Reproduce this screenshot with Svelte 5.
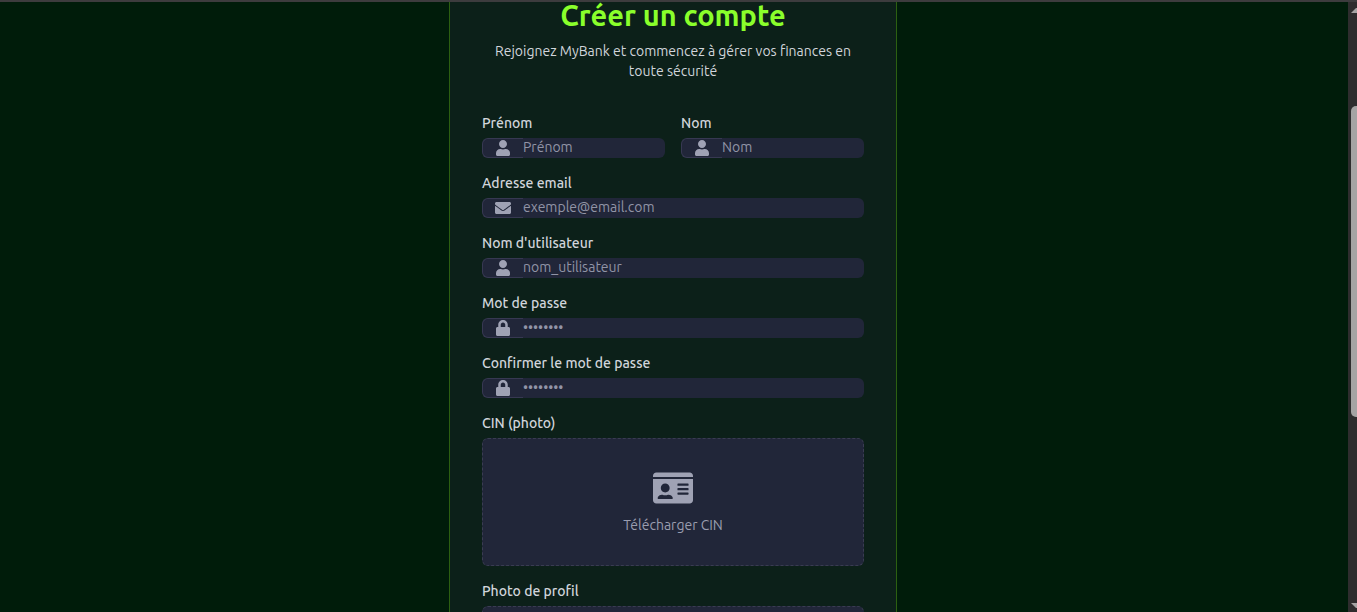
<script>
  const icons = {
    user: {
      box: '0 0 448 512',
      path: 'M224 256c70.7 0 128-57.3 128-128S294.7 0 224 0 96 57.3 96 128s57.3 128 128 128zm89.6 32h-16.7c-22.2 10.2-46.9 16-72.9 16s-50.6-5.8-72.9-16h-16.7C60.2 288 0 348.2 0 422.4V464c0 26.5 21.5 48 48 48h352c26.5 0 48-21.5 48-48v-41.6c0-74.2-60.2-134.4-134.4-134.4z'
    },
    mail: {
      box: '0 0 512 512',
      path: 'M502.3 190.8c3.9-3.1 9.7-.2 9.7 4.7V400c0 26.5-21.5 48-48 48H48c-26.5 0-48-21.5-48-48V195.6c0-5 5.7-7.8 9.7-4.7 22.4 17.4 52.1 39.5 154.1 113.6 21.1 15.4 56.7 47.8 92.2 47.6 35.7.3 72-32.8 92.3-47.6 102-74.1 131.6-96.3 154-113.7zM256 320c23.2.4 56.6-29.2 73.4-41.4 132.7-96.3 142.8-104.7 173.4-128.7 5.8-4.5 9.2-11.5 9.2-18.9v-19c0-26.5-21.5-48-48-48H48c-26.5 0-48 21.5-48 48v19c0 7.4 3.4 14.3 9.2 18.9 30.6 23.9 40.7 32.4 173.4 128.7 16.8 12.2 50.2 41.8 73.4 41.4z'
    },
    lock: {
      box: '0 0 448 512',
      path: 'M400 224h-24v-72C376 68.2 307.8 0 224 0S72 68.2 72 152v72H48c-26.5 0-48 21.5-48 48v192c0 26.5 21.5 48 48 48h352c26.5 0 48-21.5 48-48V272c0-26.5-21.5-48-48-48zm-104 0H152v-72c0-39.7 32.3-72 72-72s72 32.3 72 72v72z'
    }
  };

  const fields = [
    { id: 'firstName', label: 'Prénom', hint: 'Prénom', type: 'text', icon: 'user', half: true },
    { id: 'lastName', label: 'Nom', hint: 'Nom', type: 'text', icon: 'user', half: true },
    { id: 'email', label: 'Adresse email', hint: 'exemple@email.com', type: 'email', icon: 'mail' },
    { id: 'username', label: "Nom d'utilisateur", hint: 'nom_utilisateur', type: 'text', icon: 'user' },
    { id: 'password', label: 'Mot de passe', hint: '••••••••', type: 'password', icon: 'lock' },
    { id: 'confirm', label: 'Confirmer le mot de passe', hint: '••••••••', type: 'password', icon: 'lock' }
  ];
</script>

<div class="window">
  <main>
    <section class="card">
      <header>
        <h1>Créer un compte</h1>
        <p>Rejoignez MyBank et commencez à gérer vos finances en toute sécurité</p>
      </header>

      <form>
        {#each fields as field (field.id)}
          <div class="field" class:half={field.half}>
            <label for={field.id}>{field.label}</label>
            <div class="control">
              <span class="addon">
                <svg viewBox={icons[field.icon].box} aria-hidden="true"><path d={icons[field.icon].path} /></svg>
              </span>
              <input id={field.id} type={field.type} placeholder={field.hint} autocomplete="off" />
            </div>
          </div>
        {/each}

        <div class="field">
          <label for="cin">CIN (photo)</label>
          <label class="drop">
            <input id="cin" type="file" accept="image/*" />
            <svg viewBox="0 0 576 512" aria-hidden="true">
              <path
                d="M528 32H48C21.5 32 0 53.5 0 80v16h576V80c0-26.5-21.5-48-48-48zM0 432c0 26.5 21.5 48 48 48h480c26.5 0 48-21.5 48-48V128H0v304zm352-232c0-4.4 3.6-8 8-8h144c4.4 0 8 3.6 8 8v16c0 4.4-3.6 8-8 8H360c-4.4 0-8-3.6-8-8v-16zm0 64c0-4.4 3.6-8 8-8h144c4.4 0 8 3.6 8 8v16c0 4.4-3.6 8-8 8H360c-4.4 0-8-3.6-8-8v-16zm0 64c0-4.4 3.6-8 8-8h144c4.4 0 8 3.6 8 8v16c0 4.4-3.6 8-8 8H360c-4.4 0-8-3.6-8-8v-16zM176 192c35.3 0 64 28.7 64 64s-28.7 64-64 64-64-28.7-64-64 28.7-64 64-64zM67.1 396.2C75.5 370.5 99.6 352 128 352h8.2c12.3 5.1 25.7 8 39.8 8s27.6-2.9 39.8-8h8.2c28.4 0 52.5 18.5 60.9 44.2 3.2 9.9-5.2 19.8-15.6 19.8H82.7c-10.4 0-18.8-10-15.6-19.8z"
              />
            </svg>
            <span>Télécharger CIN</span>
          </label>
        </div>

        <div class="field">
          <label for="portrait">Photo de profil</label>
          <label class="drop">
            <input id="portrait" type="file" accept="image/*" />
          </label>
        </div>
      </form>
    </section>
  </main>

  <div class="scrollbar" aria-hidden="true">
    <svg viewBox="0 0 6 6"><path d="M0 5L5 0h1v5z" /></svg>
    <div class="track"><div class="thumb"></div></div>
    <svg viewBox="0 0 6 6"><path d="M0 0h6v5H5z" /></svg>
  </div>
</div>

<style>
  :global(body) {
    margin: 0;
    overflow: hidden;
    background: #001c0a;
  }

  .window {
    box-sizing: border-box;
    display: flex;
    height: 100vh;
    border-top: 2px solid #3d3c3e;
    overflow: hidden;
    color: #d1d5db;
    font: 400 14px/20px Ubuntu, 'Noto Sans', sans-serif;
  }

  main {
    flex: 1;
    display: flex;
    justify-content: center;
    align-items: flex-start;
    padding-right: 2px;
    overflow: hidden;
  }

  .card {
    box-sizing: border-box;
    width: 100%;
    max-width: 448px;
    padding: 0 32px 32px;
    border: 1px solid #2c6011;
    border-top: 0;
    background: #0c2019;
  }

  header {
    margin-bottom: 32px;
    text-align: center;
  }

  h1 {
    margin: 0 0 13px;
    color: #8aff2b;
    font-size: 29px;
    font-weight: 700;
    line-height: 26px;
  }

  p {
    margin: 0;
  }

  form {
    display: grid;
    grid-template-columns: 1fr 1fr;
    gap: 15px 16px;
  }

  .field {
    grid-column: span 2;
    display: flex;
    flex-direction: column;
    gap: 5px;
    min-width: 0;
  }

  .field.half {
    grid-column: span 1;
  }

  .field > label:first-child {
    font-weight: 500;
  }

  .control {
    display: flex;
    height: 20px;
  }

  .addon {
    box-sizing: border-box;
    flex: none;
    display: flex;
    align-items: center;
    justify-content: center;
    width: 41px;
    border: 1px solid #373852;
    border-right: 0;
    border-radius: 6px 0 0 6px;
    background: #212639;
  }

  .addon svg {
    height: 16px;
    fill: #9fa2b4;
  }

  .control input {
    flex: 1;
    min-width: 0;
    height: 20px;
    box-sizing: border-box;
    padding: 0 0 2px;
    border: 0;
    border-radius: 0 6px 6px 0;
    outline-color: #8aff2b;
    background: #212639;
    color: #d1d5db;
    font: inherit;
  }

  .control input::placeholder {
    color: #9194a6;
    opacity: 1;
  }

  .drop {
    box-sizing: border-box;
    display: flex;
    flex-direction: column;
    align-items: center;
    justify-content: center;
    gap: 8px;
    height: 128px;
    border: 1px dashed #3a3c52;
    border-radius: 6px;
    background: #212639;
    color: #9a9daf;
    cursor: pointer;
  }

  .drop input {
    position: absolute;
    width: 1px;
    height: 1px;
    opacity: 0;
  }

  .drop svg {
    width: 40px;
    height: 38px;
    fill: #9fa2b4;
  }

  .scrollbar {
    flex: none;
    box-sizing: border-box;
    display: flex;
    flex-direction: column;
    width: 9px;
    padding: 6px 0 3px 3px;
    background: #2e2d2e;
  }

  .scrollbar svg {
    flex: none;
    width: 6px;
    height: 6px;
    fill: #a5a4a4;
  }

  .track {
    flex: 1;
    display: flex;
    flex-direction: column;
  }

  .track::before {
    content: '';
    flex: 92;
  }

  .track::after {
    content: '';
    flex: 186;
  }

  .thumb {
    flex: 311;
    border-radius: 5px 0 0 5px;
    background: #a5a4a4;
  }
</style>
